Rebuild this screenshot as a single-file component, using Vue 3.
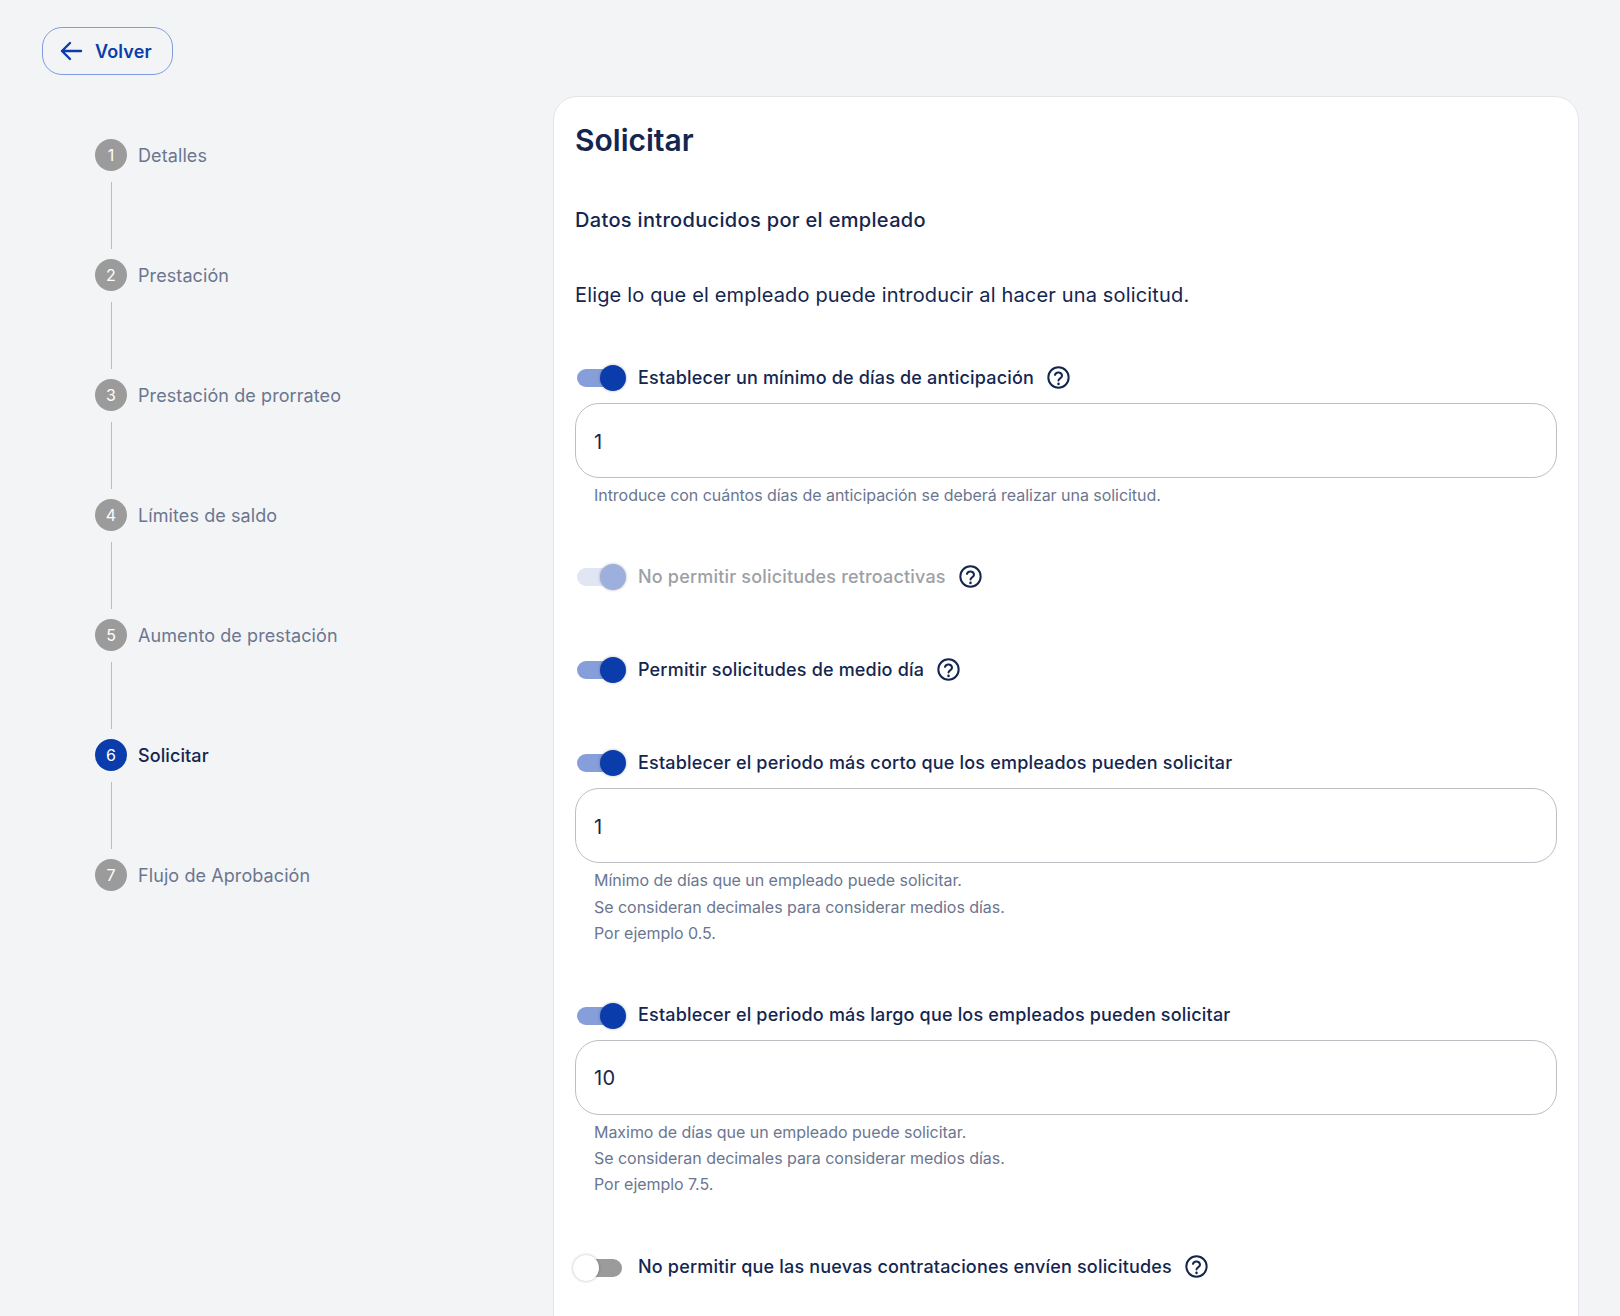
<script setup>
const steps = [
  { n: 1, label: 'Detalles' },
  { n: 2, label: 'Prestación' },
  { n: 3, label: 'Prestación de prorrateo' },
  { n: 4, label: 'Límites de saldo' },
  { n: 5, label: 'Aumento de prestación' },
  { n: 6, label: 'Solicitar', active: true },
  { n: 7, label: 'Flujo de Aprobación' },
]
const rows = [
  { label: 'Establecer un mínimo de días de anticipación', on: true, help: true, value: '1', notes: ['Introduce con cuántos días de anticipación se deberá realizar una solicitud.'], cls: 'r1' },
  { label: 'No permitir solicitudes retroactivas', on: true, disabled: true, help: true, cls: 'r2' },
  { label: 'Permitir solicitudes de medio día', on: true, help: true, cls: 'r3' },
  { label: 'Establecer el periodo más corto que los empleados pueden solicitar', on: true, value: '1', notes: ['Mínimo de días que un empleado puede solicitar.', 'Se consideran decimales para considerar medios días.', 'Por ejemplo 0.5.'], cls: 'r4' },
  { label: 'Establecer el periodo más largo que los empleados pueden solicitar', on: true, value: '10', notes: ['Maximo de días que un empleado puede solicitar.', 'Se consideran decimales para considerar medios días.', 'Por ejemplo 7.5.'], cls: 'r5' },
  { label: 'No permitir que las nuevas contrataciones envíen solicitudes', on: false, help: true, cls: 'r6' },
]
</script>

<template>
  <div class="page">
    <button class="back" type="button">
      <svg class="back-icon" viewBox="0 0 24 24" fill="none" stroke="currentColor" stroke-width="2.4" stroke-linecap="round" stroke-linejoin="round"><path d="M22 12H3M11 4l-8 8 8 8" /></svg>
      <span>Volver</span>
    </button>
    <div class="layout">
      <ol class="steps">
        <li v-for="s in steps" :key="s.n" class="step" :class="{ active: s.active }">
          <div class="step-head">
            <span class="num">{{ s.n }}</span>
            <span class="step-label">{{ s.label }}</span>
          </div>
          <div v-if="s.n < 7" class="connector"></div>
        </li>
      </ol>
      <main class="card">
        <h1>Solicitar</h1>
        <h2>Datos introducidos por el empleado</h2>
        <p class="intro">Elige lo que el empleado puede introducir al hacer una solicitud.</p>
        <section v-for="r in rows" :key="r.label" class="field" :class="r.cls">
          <div class="toggle-row" :class="{ disabled: r.disabled }">
            <span class="switch" :class="{ on: r.on }"><span class="track"></span><span class="thumb"></span></span>
            <span class="label">{{ r.label }}</span>
            <svg v-if="r.help" class="help" viewBox="0 0 24 24" fill="none" stroke="currentColor" stroke-width="2.1" stroke-linecap="round"><circle cx="12" cy="12" r="10.6" /><path d="M8.3 9.3a3.8 3.8 0 0 1 7.4 1c0 2.5-3.7 2.8-3.7 4.8" /><path d="M12 18.6v.1" stroke-width="2.6" /></svg>
          </div>
          <div v-if="r.value" class="input">{{ r.value }}</div>
          <div v-if="r.notes" class="notes"><div v-for="n in r.notes" :key="n">{{ n }}</div></div>
        </section>
      </main>
    </div>
  </div>
</template>

<style>
html, body { margin: 0; background: #f3f4f6; }
</style>

<style scoped>
.page {
  box-sizing: border-box;
  height: 1316px;
  overflow: hidden;
  padding: 27px 42px 0;
  background: #f3f4f6;
  font-family: Inter, "Liberation Sans", sans-serif;
  color: #14264f;
}
.back {
  box-sizing: border-box;
  width: 131px;
  height: 48px;
  display: flex;
  align-items: center;
  gap: 12px;
  padding: 0 0 0 16px;
  border: 1px solid #7f9ce0;
  border-radius: 20px;
  background: transparent;
  color: #0a3dab;
  font: 600 18px Inter, sans-serif;
  letter-spacing: .15px;
}
.back-icon { width: 24px; height: 24px; flex: none; }
.layout { display: flex; margin-top: 21px; }
.steps { list-style: none; margin: 0; padding: 43px 0 0 53px; width: 511px; box-sizing: border-box; flex: none; }
.step-head { display: flex; align-items: center; gap: 11px; height: 32px; }
.num {
  width: 32px;
  height: 32px;
  border-radius: 50%;
  background: #9b9b9b;
  color: #fff;
  font-size: 16px;
  display: flex;
  align-items: center;
  justify-content: center;
}
.step-label { font-size: 18px; color: #6b7690; letter-spacing: .09px; }
.connector { width: 1px; height: 67px; margin: 11px 0 10px 16px; background: #b9bcc2; }
.active .num { background: #0a3dab; }
.active .step-label { color: #14264f; font-weight: 500; }
.card {
  box-sizing: border-box;
  flex: none;
  width: 1026px;
  height: 1300px;
  padding: 0 21px;
  background: #fff;
  border: 1px solid #e3e5e8;
  border-radius: 24px;
}
h1 { margin: 23px 0 0; font-size: 30px; line-height: 40px; font-weight: 600; color: #14264f; }
h2 { margin: 46px 0 0; font-size: 20px; line-height: 28px; font-weight: 500; letter-spacing: .33px; }
.intro { margin: 47px 0 0; font-size: 20px; line-height: 28px; letter-spacing: .16px; }
.toggle-row { display: flex; align-items: center; height: 28px; }
.switch { position: relative; width: 51px; height: 28px; flex: none; margin-right: 12px; }
.track { position: absolute; left: 2px; top: 6px; width: 45px; height: 18px; border-radius: 9px; background: #9b9b9b; }
.switch.on .track { background: #869ed9; }
.thumb {
  position: absolute;
  left: -2px;
  top: 2px;
  width: 26px;
  height: 26px;
  border-radius: 50%;
  background: #fff;
  box-shadow: 0 0 3px rgba(0, 0, 0, .3);
}
.switch.on .thumb { left: 25px; background: #0a3dab; }
.label { font-size: 18px; font-weight: 500; color: #14264f; letter-spacing: .18px; }
.help { width: 23px; height: 23px; margin-left: 13px; color: #14264f; flex: none; }
.disabled .switch .track { background: #e1e6f3; }
.disabled .switch .thumb { background: #9db0dd; }
.disabled .label { color: #9c9fa6; }
.input {
  box-sizing: border-box;
  height: 75px;
  margin-top: 12px;
  padding: 2px 18px 0;
  display: flex;
  align-items: center;
  border: 1px solid #bcbfc4;
  border-radius: 24px;
  font-size: 20px;
  color: #14264f;
  letter-spacing: .3px;
}
.notes { margin-top: 4px; padding-left: 19px; font-size: 16px; line-height: 26.4px; color: #6b7690; letter-spacing: -.04px; }
.r1 { margin-top: 54px; }
.r2 { margin-top: 54px; }
.r3 { margin-top: 65px; }
.r4 { margin-top: 65px; }
.r5 { margin-top: 54px; }
.r5 .input { margin-top: 11px; }
.r6 { margin-top: 55px; }
</style>
